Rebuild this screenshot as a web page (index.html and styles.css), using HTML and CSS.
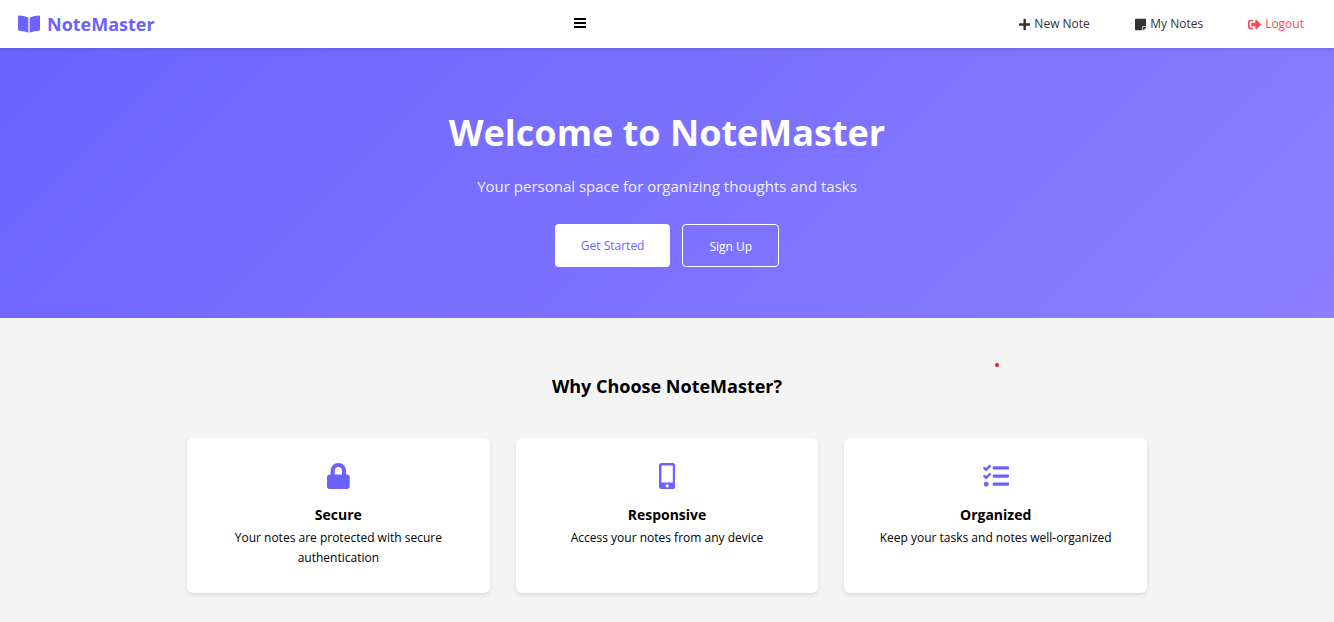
FILE: index.html
```html
<!DOCTYPE html>
<html lang="en">
<head>
<meta charset="utf-8">
<meta name="viewport" content="width=device-width, initial-scale=1">
<title>NoteMaster</title>
<link rel="stylesheet" href="styles.css">
</head>
<body>
<header class="navbar">
  <a class="logo" href="#">
    <svg class="logo-icon" viewBox="0 0 576 512" aria-hidden="true"><path d="M542.22 32.05c-54.8 3.11-163.72 14.43-230.96 55.59-4.64 2.84-7.27 7.89-7.27 13.17v363.87c0 11.55 12.63 18.85 23.28 13.49 69.18-34.82 169.23-44.32 218.7-46.92 16.89-.89 30.02-14.43 30.02-30.66V62.75c.01-17.71-15.35-31.74-33.77-30.7zM264.73 87.64C197.5 46.48 88.58 35.17 33.78 32.05 15.36 31.01 0 45.04 0 62.75V400.6c0 16.24 13.13 29.78 30.02 30.66 49.49 2.6 149.59 12.11 218.77 46.95 10.62 5.35 23.21-1.94 23.21-13.46V100.63c0-5.29-2.62-10.14-7.27-12.99z"/></svg>
    <span>NoteMaster</span>
  </a>
  <button class="menu-toggle" type="button" aria-label="Menu">
    <svg class="menu-icon" viewBox="0 0 12 14" aria-hidden="true"><path d="M0 1h12v2H0zM0 5h12v2H0zM0 9h12v2H0z"/></svg>
  </button>
  <nav class="nav-links">
    <a class="nav-link" href="#">
      <svg class="nav-icon" viewBox="0 0 448 512" aria-hidden="true"><path d="M416 208H272V64c0-17.67-14.33-32-32-32h-32c-17.67 0-32 14.33-32 32v144H32c-17.67 0-32 14.33-32 32v32c0 17.67 14.33 32 32 32h144v144c0 17.67 14.33 32 32 32h32c17.67 0 32-14.33 32-32V304h144c17.67 0 32-14.33 32-32v-32c0-17.67-14.33-32-32-32z"/></svg>
      <span>New Note</span>
    </a>
    <a class="nav-link" href="#">
      <svg class="nav-icon" viewBox="0 0 448 512" aria-hidden="true"><path d="M312 320h136V56c0-13.3-10.7-24-24-24H24C10.7 32 0 42.7 0 56v400c0 13.3 10.7 24 24 24h264V344c0-13.2 10.8-24 24-24zm129 55l-98 98c-4.5 4.5-10.6 7-17 7h-6V352h128v6.1c0 6.3-2.5 12.4-7 16.9z"/></svg>
      <span>My Notes</span>
    </a>
    <a class="nav-link logout" href="#">
      <svg class="nav-icon" viewBox="0 0 512 512" aria-hidden="true"><path d="M497 273L329 441c-15 15-41 4.5-41-17v-96H152c-13.3 0-24-10.7-24-24v-96c0-13.3 10.7-24 24-24h136V88c0-21.4 25.9-32 41-17l168 168c9.3 9.4 9.3 24.6 0 34zM192 436v-40c0-6.6-5.4-12-12-12H96c-17.7 0-32-14.3-32-32V160c0-17.7 14.3-32 32-32h84c6.6 0 12-5.4 12-12V76c0-6.6-5.4-12-12-12H96c-53 0-96 43-96 96v192c0 53 43 96 96 96h84c6.6 0 12-5.4 12-12z"/></svg>
      <span>Logout</span>
    </a>
  </nav>
</header>
<main>
  <section class="hero">
    <h1 class="hero-title">Welcome to NoteMaster</h1>
    <p class="hero-text">Your personal space for organizing thoughts and tasks</p>
    <div class="hero-actions">
      <a class="btn btn-primary" href="#">Get Started</a>
      <a class="btn btn-outline" href="#">Sign Up</a>
    </div>
  </section>
  <section class="features">
    <span class="marker"></span>
    <h2 class="features-title">Why Choose NoteMaster?</h2>
    <div class="feature-grid">
      <article class="card">
        <svg class="card-icon" viewBox="0 0 448 512" aria-hidden="true"><path d="M400 224h-24v-72C376 68.2 307.8 0 224 0S72 68.2 72 152v72H48c-26.5 0-48 21.5-48 48v192c0 26.5 21.5 48 48 48h352c26.5 0 48-21.5 48-48V272c0-26.5-21.5-48-48-48zm-104 0H152v-72c0-39.7 32.3-72 72-72s72 32.3 72 72v72z"/></svg>
        <h3 class="card-title">Secure</h3>
        <p class="card-text">Your notes are protected with secure authentication</p>
      </article>
      <article class="card">
        <svg class="card-icon" viewBox="0 0 320 512" aria-hidden="true"><path d="M272 0H48C21.5 0 0 21.5 0 48v416c0 26.5 21.5 48 48 48h224c26.5 0 48-21.5 48-48V48c0-26.5-21.5-48-48-48zM160 480c-17.7 0-32-14.3-32-32s14.3-32 32-32 32 14.3 32 32-14.3 32-32 32zm112-108c0 6.6-5.4 12-12 12H60c-6.6 0-12-5.4-12-12V60c0-6.6 5.4-12 12-12h200c6.6 0 12 5.4 12 12v312z"/></svg>
        <h3 class="card-title">Responsive</h3>
        <p class="card-text">Access your notes from any device</p>
      </article>
      <article class="card">
        <svg class="card-icon" viewBox="0 0 512 512" aria-hidden="true"><path d="M139.61 35.5a12 12 0 0 0-17 0L58.93 98.81l-22.7-22.12a12 12 0 0 0-17 0L3.53 92.41a12 12 0 0 0 0 17l47.59 47.4a12.78 12.78 0 0 0 17.61 0l15.59-15.62L156.52 69a12.09 12.09 0 0 0 .09-17zm0 159.19a12 12 0 0 0-17 0l-63.68 63.72-22.7-22.1a12 12 0 0 0-17 0L3.53 252a12 12 0 0 0 0 17L51 316.5a12.77 12.77 0 0 0 17.6 0l15.7-15.69 72.2-72.22a12 12 0 0 0 .09-16.9zM64 368c-26.49 0-48.59 21.5-48.59 48S37.53 464 64 464a48 48 0 0 0 0-96zm432 16H208a16 16 0 0 0-16 16v32a16 16 0 0 0 16 16h288a16 16 0 0 0 16-16v-32a16 16 0 0 0-16-16zm0-320H208a16 16 0 0 0-16 16v32a16 16 0 0 0 16 16h288a16 16 0 0 0 16-16V80a16 16 0 0 0-16-16zm0 160H208a16 16 0 0 0-16 16v32a16 16 0 0 0 16 16h288a16 16 0 0 0 16-16v-32a16 16 0 0 0-16-16z"/></svg>
        <h3 class="card-title">Organized</h3>
        <p class="card-text">Keep your tasks and notes well-organized</p>
      </article>
    </div>
  </section>
</main>
</body>
</html>
```
FILE: styles.css
```css
* {
  box-sizing: border-box;
  margin: 0;
  padding: 0;
}

body {
  font-family: "Segoe UI", "Open Sans", "Noto Sans", sans-serif;
  font-size: 12px;
  line-height: 20px;
  color: #000;
  background: #f4f4f4;
}

a {
  text-decoration: none;
}

svg {
  display: block;
  fill: currentColor;
}

.navbar {
  position: relative;
  display: flex;
  justify-content: space-between;
  align-items: center;
  padding: 8px 18px;
  background: #fff;
  box-shadow: 0 2px 4px rgba(0, 0, 0, 0.1);
}

.logo {
  display: flex;
  align-items: center;
  gap: 7px;
  font-size: 18px;
  line-height: 32px;
  font-weight: 700;
  color: #6c63ff;
}

.logo-icon {
  width: 22px;
  height: 20px;
}

.menu-toggle {
  border: 0;
  background: none;
  color: #000;
}

.menu-icon {
  width: 12px;
  height: 14px;
}

.nav-links {
  display: flex;
  gap: 20px;
}

.nav-link {
  display: flex;
  align-items: center;
  gap: 4px;
  padding: 0 12px 0 13px;
  color: #333;
}

.nav-icon {
  height: 13px;
}

.logout {
  color: #ff4757;
}

.hero {
  padding: 53px 20px 51px;
  text-align: center;
  color: #fff;
  background: linear-gradient(135deg, #6c63ff, #8b7fff);
}

.hero-title {
  margin-bottom: 10px;
  font-size: 36px;
  line-height: 64px;
  font-weight: 700;
}

.hero-text {
  margin-bottom: 27px;
  font-size: 15px;
  line-height: 22px;
  opacity: 0.9;
}

.hero-actions {
  display: flex;
  justify-content: center;
  gap: 12px;
}

.btn {
  padding: 12px 26px 10px;
  border-radius: 4px;
  line-height: 19px;
}

.btn-primary {
  background: #fff;
  color: #6c63ff;
}

.btn-outline {
  border: 1px solid #fff;
  color: #fff;
}

.features {
  position: relative;
  padding: 52px 20px 29px;
}

/* Small dot floating over the section's free space */
.marker {
  position: absolute;
  top: 45px;
  left: calc(50% + 328px);
  width: 4px;
  height: 4px;
  border-radius: 50%;
  background: #ed1c24;
}

.features-title {
  margin-bottom: 36px;
  font-size: 18px;
  line-height: 32px;
  font-weight: 700;
  text-align: center;
}

.feature-grid {
  display: grid;
  grid-template-columns: repeat(3, 1fr);
  gap: 26px;
  max-width: 960px;
  margin: 0 auto;
}

.card {
  padding: 25px 26px;
  border-radius: 6px;
  background: #fff;
  box-shadow: 0 2px 4px rgba(0, 0, 0, 0.1);
  text-align: center;
}

.card-icon {
  height: 26px;
  margin: 0 auto 13px;
  color: #6c63ff;
}

.card-title {
  font-size: 14px;
  line-height: 26px;
  font-weight: 700;
}

.card-text {
  line-height: 20px;
}
```
